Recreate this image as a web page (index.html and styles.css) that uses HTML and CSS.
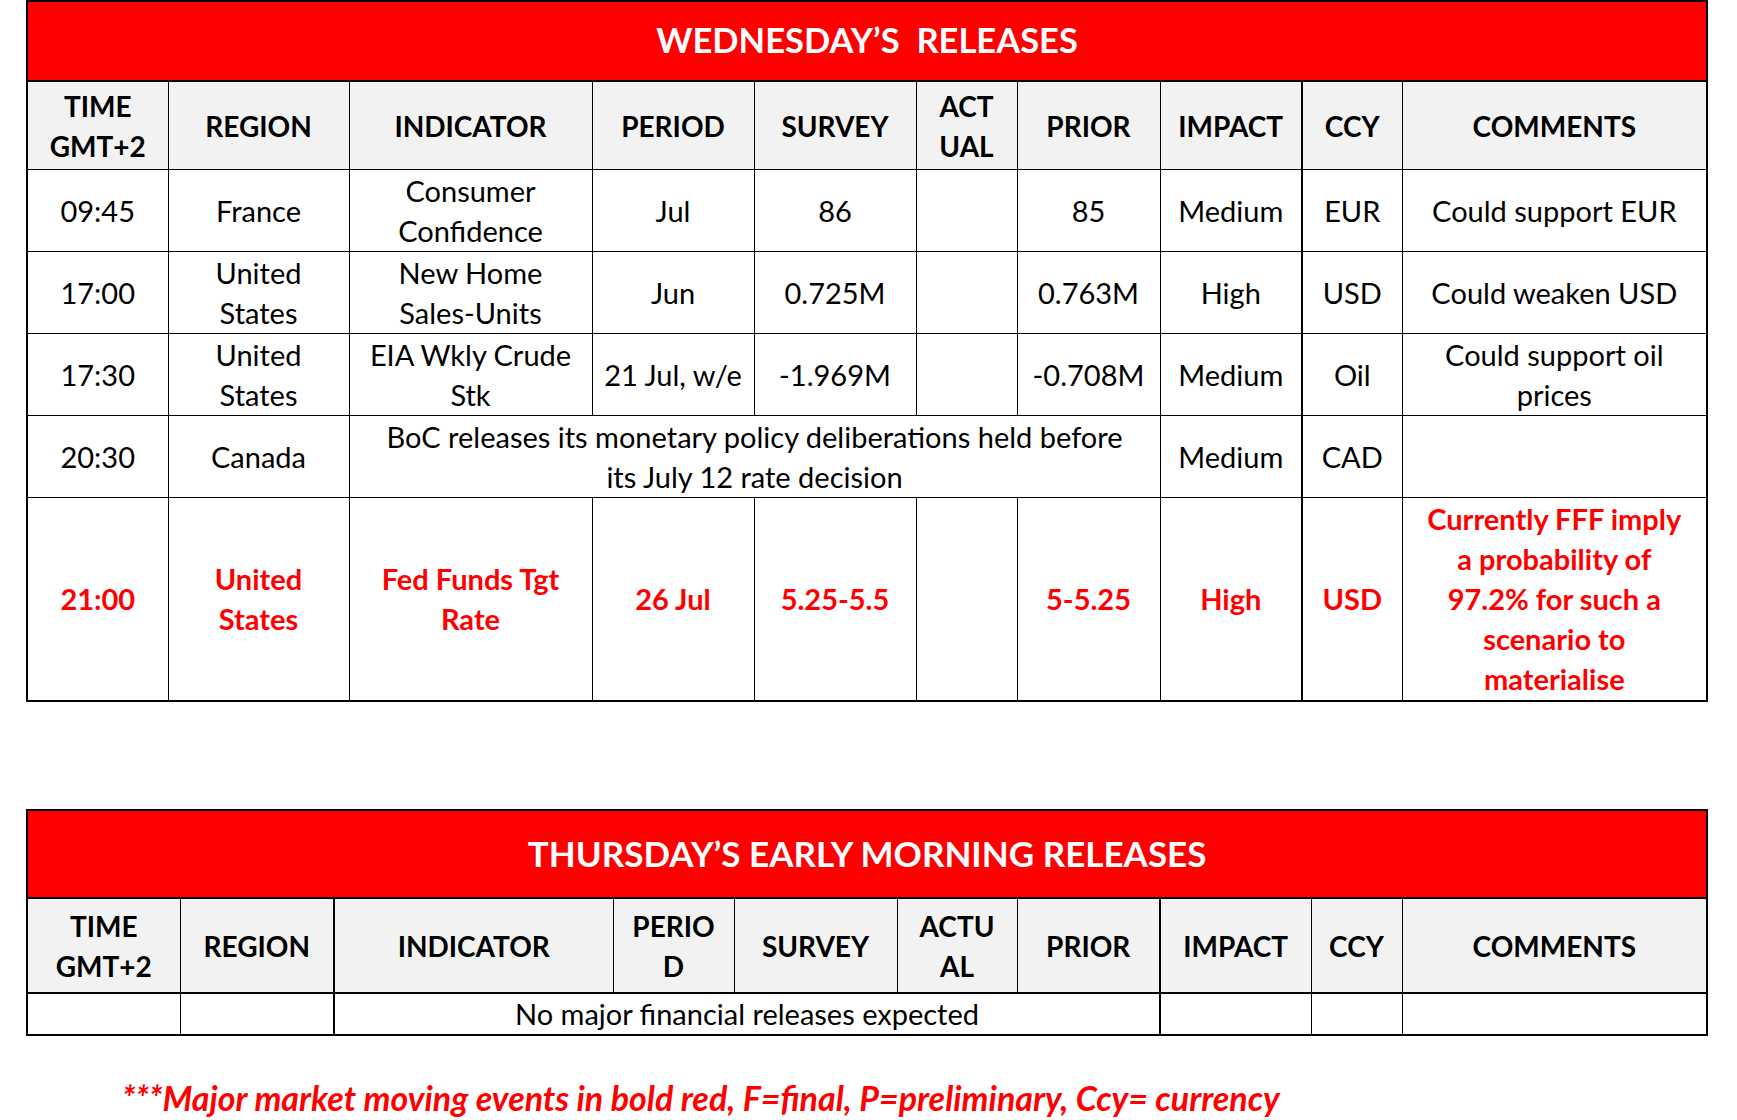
FILE: index.html
```html
<!DOCTYPE html>
<html lang="en">
<head>
<meta charset="utf-8">
<title>Releases</title>
<link rel="stylesheet" href="styles.css">
</head>
<body>
<div class="page">
  <table class="rel rel-wed">
    <colgroup>
      <col class="w-time"><col class="w-region"><col class="w-ind"><col class="w-period"><col class="w-survey">
      <col class="w-actual"><col class="w-prior"><col class="w-impact"><col class="w-ccy"><col class="w-comm">
    </colgroup>
    <thead>
      <tr class="title-row"><th colspan="10">WEDNESDAY’S&nbsp; RELEASES</th></tr>
      <tr class="head-row">
        <th>TIME<br>GMT+2</th><th>REGION</th><th>INDICATOR</th><th>PERIOD</th><th>SURVEY</th>
        <th>ACT<br>UAL</th><th>PRIOR</th><th class="thick-r">IMPACT</th><th>CCY</th><th>COMMENTS</th>
      </tr>
    </thead>
    <tbody>
      <tr class="data-row">
        <td>09:45</td><td>France</td><td>Consumer<br>Confidence</td><td>Jul</td><td>86</td>
        <td></td><td>85</td><td class="thick-r">Medium</td><td>EUR</td><td>Could support EUR</td>
      </tr>
      <tr class="data-row">
        <td>17:00</td><td>United<br>States</td><td>New Home<br>Sales-Units</td><td>Jun</td><td>0.725M</td>
        <td></td><td>0.763M</td><td class="thick-r">High</td><td>USD</td><td>Could weaken USD</td>
      </tr>
      <tr class="data-row">
        <td>17:30</td><td>United<br>States</td><td>EIA Wkly Crude<br>Stk</td><td>21 Jul, w/e</td><td>-1.969M</td>
        <td></td><td>-0.708M</td><td class="thick-r">Medium</td><td>Oil</td><td>Could support oil<br>prices</td>
      </tr>
      <tr class="data-row">
        <td>20:30</td><td>Canada</td>
        <td colspan="5">BoC releases its monetary policy deliberations held before<br>its July 12 rate decision</td>
        <td class="thick-r">Medium</td><td>CAD</td><td></td>
      </tr>
      <tr class="data-row major">
        <td>21:00</td><td>United<br>States</td><td>Fed Funds Tgt<br>Rate</td><td>26 Jul</td><td>5.25-5.5</td>
        <td></td><td>5-5.25</td><td class="thick-r">High</td><td>USD</td>
        <td>Currently FFF imply<br>a probability of<br>97.2% for such a<br>scenario to<br>materialise</td>
      </tr>
    </tbody>
  </table>

  <table class="rel rel-thu">
    <colgroup>
      <col class="t-time"><col class="t-region"><col class="t-ind"><col class="t-period"><col class="t-survey">
      <col class="t-actual"><col class="t-prior"><col class="t-impact"><col class="t-ccy"><col class="t-comm">
    </colgroup>
    <thead>
      <tr class="title-row title-thu"><th colspan="10">THURSDAY’S EARLY MORNING RELEASES</th></tr>
      <tr class="head-row head-thu">
        <th>TIME<br>GMT+2</th><th class="thick-r">REGION</th><th>INDICATOR</th><th>PERIO<br>D</th><th>SURVEY</th>
        <th>ACTU<br>AL</th><th class="thick-r">PRIOR</th><th>IMPACT</th><th>CCY</th><th>COMMENTS</th>
      </tr>
    </thead>
    <tbody>
      <tr class="thin-row">
        <td></td><td class="thick-r"></td>
        <td colspan="5" class="thick-r">No major financial releases expected</td>
        <td></td><td></td><td></td>
      </tr>
    </tbody>
  </table>

  <p class="note">***Major market moving events in bold red, F=final, P=preliminary, Ccy= currency</p>
</div>
</body>
</html>
```

FILE: styles.css
```css
html, body {
  margin: 0;
  padding: 0;
  background: #ffffff;
}

.page {
  padding: 0 0 0 26px;
  font-family: "Lato", "Liberation Sans", sans-serif;
  color: #000;
}

.rel {
  border-collapse: collapse;
  table-layout: fixed;
  width: 1680px;
  border: 2px solid #000;
}

.rel th,
.rel td {
  border: 1px solid #000;
  text-align: center;
  vertical-align: middle;
  padding: 0 2px;
  font-size: 29px;
  line-height: 40px;
  overflow: visible;
  white-space: nowrap;
}

.rel th.thick-r,
.rel td.thick-r {
  border-right-width: 2px;
}

.title-row th {
  background: #ff0000;
  color: #ffffff;
  font-weight: 700;
  font-size: 34.5px;
  height: 75px;
  padding-bottom: 3px;
  border: 2px solid #000;
}

.head-row th {
  background: #f2f2f2;
  font-weight: 700;
  font-size: 28px;
  height: 87px;
}

.data-row td {
  height: 81px;
}

.major td {
  color: #ff0000;
  font-weight: 700;
  height: 202px;
}

/* Wednesday column widths */
.w-time { width: 141px; }
.w-region { width: 181px; }
.w-ind { width: 243px; }
.w-period { width: 162px; }
.w-survey { width: 162px; }
.w-actual { width: 101px; }
.w-prior { width: 143px; }
.w-impact { width: 142px; }
.w-ccy { width: 100px; }
.w-comm { width: 305px; }

/* Thursday table */
.rel-thu {
  margin-top: 107px;
}

.title-thu th {
  font-size: 35px;
  height: 83px;
  padding-bottom: 3px;
}

.head-thu th {
  height: 93px;
  border-top-width: 2px;
}

.thin-row td {
  height: 40px;
  line-height: 40px;
  border-top-width: 2px;
}

.t-time { width: 153px; }
.t-region { width: 154px; }
.t-ind { width: 279px; }
.t-period { width: 121px; }
.t-survey { width: 163px; }
.t-actual { width: 120px; }
.t-prior { width: 143px; }
.t-impact { width: 151px; }
.t-ccy { width: 91px; }
.t-comm { width: 305px; }

.note {
  margin: 40px 0 0 96px;
  color: #ff0000;
  font-weight: 700;
  font-style: italic;
  font-size: 34px;
  line-height: 44px;
}
```
